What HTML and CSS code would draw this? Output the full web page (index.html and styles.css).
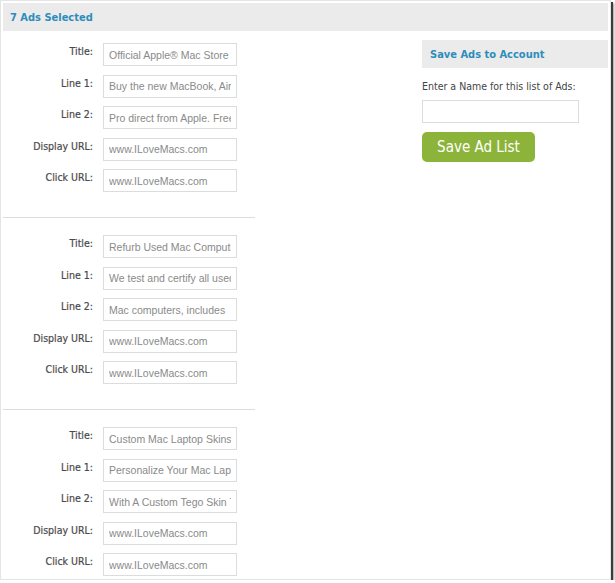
FILE: index.html
```html
<!DOCTYPE html>
<html lang="en">
<head>
    <meta charset="UTF-8">
    <title>Ads Selected</title>
    <link rel="stylesheet" href="styles.css">
</head>
<body>
    <div class="frame">
        <header class="bar">
            <h1>7 Ads Selected</h1>
        </header>

        <div class="columns">
            <section class="ads">
                <div class="ad">
                    <label>Title:</label><input type="text" value="Official Apple® Mac Store">
                    <label>Line 1:</label><input type="text" value="Buy the new MacBook, Air">
                    <label>Line 2:</label><input type="text" value="Pro direct from Apple. Free">
                    <label>Display URL:</label><input type="text" value="www.ILoveMacs.com">
                    <label>Click URL:</label><input type="text" value="www.ILoveMacs.com">
                </div>
                <div class="ad">
                    <label>Title:</label><input type="text" value="Refurb Used Mac Computers">
                    <label>Line 1:</label><input type="text" value="We test and certify all used">
                    <label>Line 2:</label><input type="text" value="Mac computers, includes">
                    <label>Display URL:</label><input type="text" value="www.ILoveMacs.com">
                    <label>Click URL:</label><input type="text" value="www.ILoveMacs.com">
                </div>
                <div class="ad">
                    <label>Title:</label><input type="text" value="Custom Mac Laptop Skins">
                    <label>Line 1:</label><input type="text" value="Personalize Your Mac Laptop">
                    <label>Line 2:</label><input type="text" value="With A Custom Tego Skin Today">
                    <label>Display URL:</label><input type="text" value="www.ILoveMacs.com">
                    <label>Click URL:</label><input type="text" value="www.ILoveMacs.com">
                </div>
            </section>

            <aside class="save">
                <h2 class="save-title">Save Ads to Account</h2>
                <label class="save-label" for="list-name">Enter a Name for this list of Ads:</label>
                <input type="text" id="list-name" class="save-input">
                <button class="save-button">Save Ad List</button>
            </aside>
        </div>
    </div>
</body>
</html>
```

FILE: styles.css
```css
/* Page frame */
body {
    margin: 0;
    padding: 0;
    background-color: #fff;
    font-family: "DejaVu Sans Condensed", "DejaVu Sans", sans-serif;
}

.frame {
    width: 605px;
    height: 574px;
    padding: 2px;
    border: 1px solid #e4e4e4;
    background-color: #fff;
    box-shadow: 2px 2px 0 #3c3c3c, 3px 3px 2px #999;
    overflow: hidden;
}

.bar {
    background-color: #ebebeb;
    height: 28px;
    display: flex;
    align-items: center;
    padding-left: 7px;
}

.bar h1 {
    margin: 0;
    font-size: 11px;
    font-weight: bold;
    color: #2d8dbb;
}

.columns {
    display: flex;
}

/* Ads list */
.ads {
    width: 252px;
}

.ad {
    display: grid;
    grid-template-columns: 90px 134px;
    column-gap: 10px;
    row-gap: 8.5px;
    padding: 17px 0 25px;
    border-bottom: 1px solid #ddd;
}

.ad:first-child {
    padding-top: 12px;
}

.ad:last-child {
    border-bottom: none;
}

.ad label {
    text-align: right;
    font-size: 10.5px;
    color: #4a4a4a;
    padding-top: 2px;
    -webkit-text-stroke: 0.2px #4a4a4a;
}

.ad input {
    height: 23px;
    width: 134px;
    box-sizing: border-box;
    border: 1px solid #dcdcdc;
    padding: 0 5px;
    font-family: "Liberation Sans", Arial, sans-serif;
    font-size: 10.5px;
    color: #8a8a8a;
    background-color: #fff;
}

/* Save panel */
.save {
    margin-left: 167px;
    margin-top: 9px;
    flex: 1;
}

.save-title {
    margin: 0;
    background-color: #ebebeb;
    height: 28px;
    display: flex;
    align-items: center;
    padding-left: 8px;
    font-size: 11px;
    font-weight: bold;
    color: #2d8dbb;
}

.save-label {
    display: block;
    margin-top: 12px;
    font-size: 10.5px;
    color: #444;
}

.save-input {
    display: block;
    width: 157px;
    height: 23px;
    box-sizing: border-box;
    margin-top: 8px;
    border: 1px solid #dcdcdc;
}

.save-button {
    display: block;
    margin-top: 9px;
    width: 113px;
    height: 30px;
    border: none;
    border-radius: 5px;
    background-color: #8db43a;
    color: #fff;
    font-family: "DejaVu Sans Condensed", "DejaVu Sans", sans-serif;
    font-size: 15px;
}
```
